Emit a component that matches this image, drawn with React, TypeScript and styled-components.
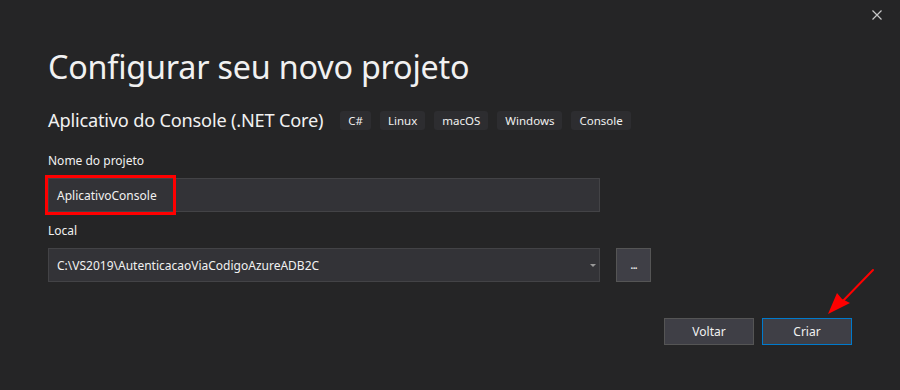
import styled, { createGlobalStyle } from "styled-components";

const GlobalStyle = createGlobalStyle`
  html, body {
    margin: 0;
    padding: 0;
    background: #252526;
  }
  * {
    box-sizing: border-box;
  }
`;

const Dialog = styled.div`
  position: relative;
  width: 900px;
  height: 390px;
  background: #252526;
  color: #f1f1f1;
  font-family: "Noto Sans", "Open Sans", sans-serif;
  overflow: hidden;
`;

const TitleBar = styled.div`
  display: flex;
  justify-content: flex-end;
  height: 30px;
  padding: 9px 17px 0 0;
`;

const CloseButton = styled.button`
  width: 12px;
  height: 12px;
  padding: 0;
  border: none;
  background: none;
  display: flex;
  cursor: pointer;
`;

const Body = styled.div`
  display: flex;
  flex-direction: column;
  padding: 0 48px;
`;

const Title = styled.h1`
  margin: 15px 0 0;
  font-size: 32.3px;
  font-weight: 400;
  line-height: 42px;
  letter-spacing: -0.2px;
  color: #f1f1f1;
`;

const TemplateRow = styled.div`
  display: flex;
  align-items: center;
  gap: 9px;
  margin-top: 21px;
`;

const TemplateName = styled.span`
  font-size: 18.2px;
  line-height: 24px;
  margin-right: 8px;
  letter-spacing: -0.2px;
`;

const Tag = styled.span`
  display: inline-flex;
  align-items: center;
  height: 19px;
  padding: 0 8px;
  border-radius: 3px;
  background: #2d2d30;
  font-size: 11.5px;
  color: #f1f1f1;
`;

const Label = styled.div<{ $top: number }>`
  margin-top: ${(p) => p.$top}px;
  font-size: 12px;
  line-height: 16px;
  color: #f1f1f1;
`;

const FieldRow = styled.div`
  display: flex;
  align-items: center;
  gap: 16px;
  margin-top: 9px;
`;

const Field = styled.div`
  position: relative;
  display: flex;
  align-items: center;
  width: 552px;
  height: 34px;
  padding: 0 8px;
  background: #333337;
  border: 1px solid #434346;
  font-size: 12px;
  color: #f1f1f1;
`;

const Highlight = styled.div`
  position: absolute;
  left: -4px;
  top: -4px;
  width: 131px;
  height: 40px;
  border: 3px solid #ff0000;
  pointer-events: none;
`;

const Caret = styled.span`
  position: absolute;
  right: 3px;
  top: 15px;
  width: 0;
  height: 0;
  border-left: 3px solid transparent;
  border-right: 3px solid transparent;
  border-top: 3px solid #999999;
`;

const BrowseButton = styled.button`
  width: 35px;
  height: 34px;
  padding: 0;
  background: #3f3f46;
  border: 1px solid #555555;
  color: #f1f1f1;
  font-family: inherit;
  font-size: 12px;
  line-height: 12px;
  letter-spacing: -1px;
`;

const Footer = styled.div`
  display: flex;
  justify-content: flex-end;
  gap: 8px;
  margin-top: 36px;
`;

const Button = styled.button<{ $primary?: boolean }>`
  width: 90px;
  height: 27px;
  background: #3f3f46;
  border: 1px solid ${(p) => (p.$primary ? "#007acc" : "#555555")};
  color: #f1f1f1;
  font-family: inherit;
  font-size: 12px;
  cursor: pointer;
`;

const Arrow = styled.svg`
  position: absolute;
  left: 820px;
  top: 262px;
  pointer-events: none;
`;

export default function App() {
  return (
    <>
      <GlobalStyle />
      <Dialog>
        <TitleBar>
          <CloseButton aria-label="Fechar">
            <svg width="12" height="12" viewBox="0 0 12 12">
              <path d="M1.5 1.5 L10.5 10.5 M10.5 1.5 L1.5 10.5" stroke="#c8c8c8" strokeWidth="1.2" />
            </svg>
          </CloseButton>
        </TitleBar>
        <Body>
          <Title>Configurar seu novo projeto</Title>
          <TemplateRow>
            <TemplateName>Aplicativo do Console (.NET Core)</TemplateName>
            <Tag>C#</Tag>
            <Tag>Linux</Tag>
            <Tag>macOS</Tag>
            <Tag>Windows</Tag>
            <Tag>Console</Tag>
          </TemplateRow>

          <Label $top={21}>Nome do projeto</Label>
          <FieldRow>
            <Field>
              AplicativoConsole
              <Highlight />
            </Field>
          </FieldRow>

          <Label $top={11}>Local</Label>
          <FieldRow>
            <Field>
              C:\VS2019\AutenticacaoViaCodigoAzureADB2C
              <Caret />
            </Field>
            <BrowseButton>...</BrowseButton>
          </FieldRow>

          <Footer>
            <Button>Voltar</Button>
            <Button $primary>Criar</Button>
          </Footer>
        </Body>

        <Arrow width="60" height="60" viewBox="0 0 60 60">
          <path d="M53 8 L18 44" stroke="#ff0000" strokeWidth="2" strokeLinecap="round" />
          <path d="M8 52 L17 31 L22 37 L30 41 Z" fill="#ff0000" />
        </Arrow>
      </Dialog>
    </>
  );
}
